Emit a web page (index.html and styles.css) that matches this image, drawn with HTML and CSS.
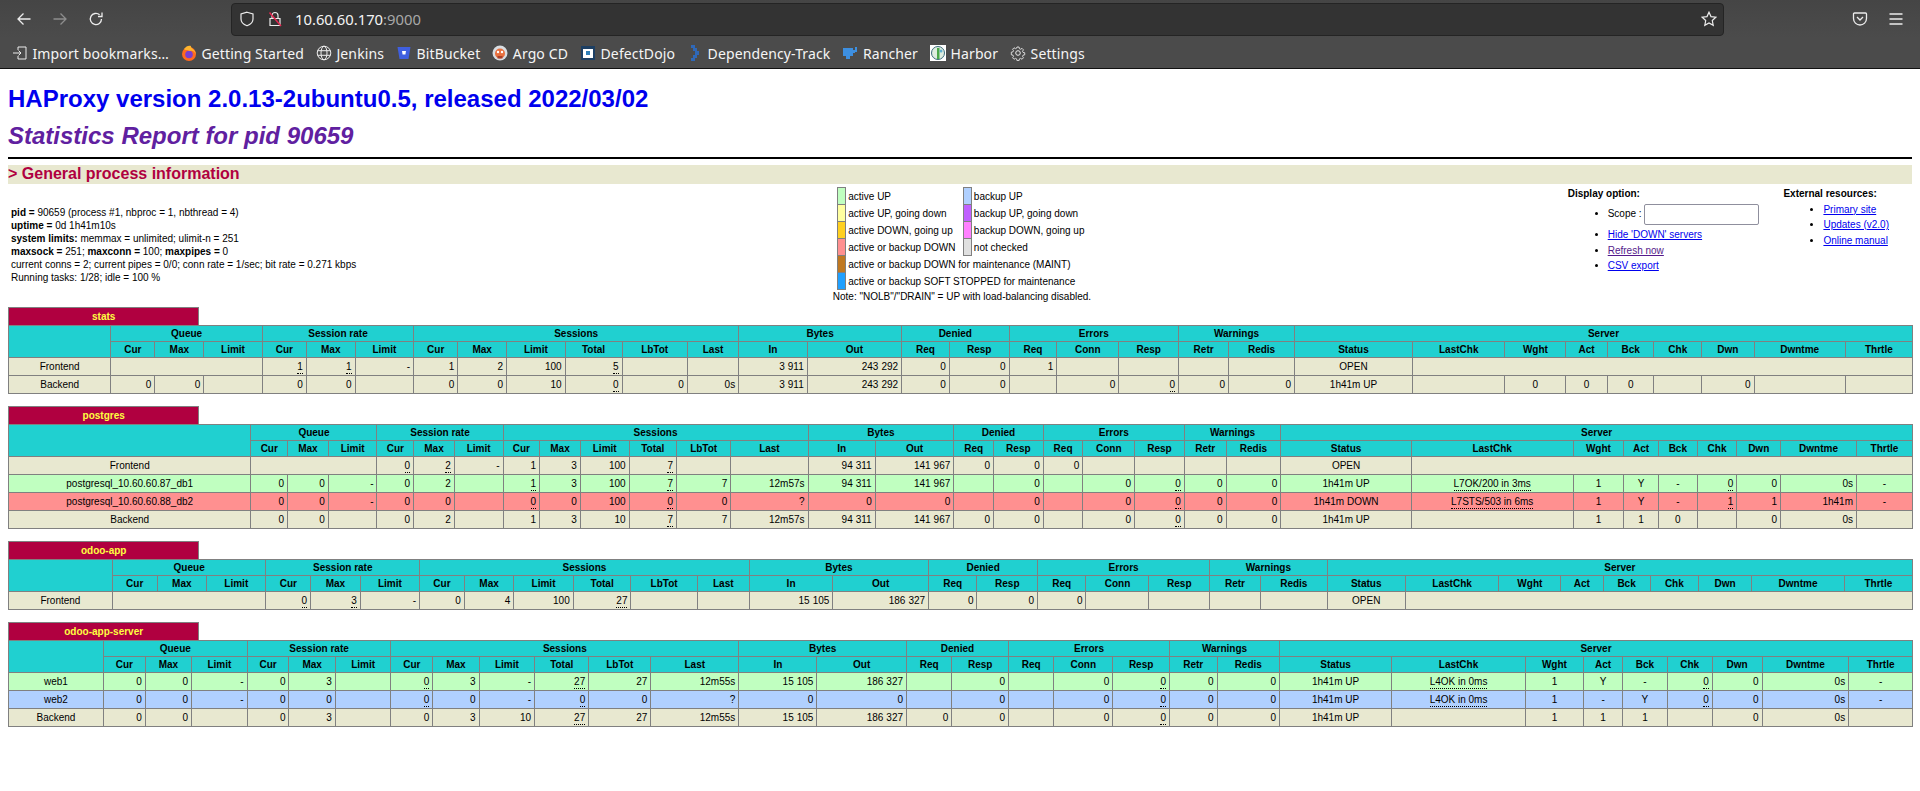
FILE: index.html
```html
<!DOCTYPE html>
<html lang="en">
<head>
<meta charset="utf-8">
<title>Statistics Report for HAProxy</title>
<link rel="stylesheet" href="styles.css">
</head>
<body>
<header class="chrome">
  <div class="navbar">
    <svg class="nav-ic" viewBox="0 0 16 16"><path d="M14.500 8H2M7.500 2.500 2 8l5.500 5.500"/></svg>
    <svg class="nav-ic dim" viewBox="0 0 16 16"><path d="M1.500 8H14M8.500 2.500 14 8l-5.500 5.500"/></svg>
    <svg class="nav-ic" viewBox="0 0 16 16"><path d="M13.500 8A5.600 5.600 0 1 1 11.600 3.800M14 1.500v4h-4"/></svg>
    <div class="urlbar">
      <svg class="url-ic" viewBox="0 0 16 16"><path d="M8 1.200 14 3v5c0 3.400-2.600 5.600-6 6.800C4.600 13.600 2 11.400 2 8V3z"/></svg>
      <svg class="url-ic lock" viewBox="0 0 16 16"><path d="M3 7.500h10v7H3zM5 7.500V4.500a3 3 0 0 1 6 0v3"/><path class="slash" d="M2.500 1.500 14 15"/></svg>
      <span class="url">10.60.60.170<span class="port">:9000</span></span>
      <svg class="url-ic star" viewBox="0 0 16 16"><path d="m8 1.200 2 4.400 4.800.6-3.500 3.300.9 4.800L8 11.900l-4.200 2.400.9-4.800L1.200 6.200 6 5.600z"/></svg>
    </div>
    <svg class="nav-ic pocket" viewBox="0 0 16 16"><path d="M2.500 2h11a1 1 0 0 1 1 1v4.500a6.500 6.500 0 0 1-13 0V3a1 1 0 0 1 1-1zM5 6l3 3 3-3"/></svg>
    <svg class="nav-ic menu" viewBox="0 0 16 16"><path d="M1.500 3h13M1.500 8h13M1.500 13h13"/></svg>
  </div>
  <nav class="bookmarks">
    <span class="bm"><svg class="bm-ic line" viewBox="0 0 16 16"><path d="M6 5V2h8v12H6v-3M1 8h8M6.500 5.500 9 8l-2.500 2.500"/></svg>Import bookmarks…</span>
    <span class="bm"><svg class="bm-ic" viewBox="0 0 16 16"><circle cx="8" cy="9" r="7" fill="#ff6a1f"/><circle cx="8" cy="9.500" r="3.800" fill="#7a3fd0"/><path d="M3 4c2-3 5-4 7-3-1 2 4 3 5 8-2-3-4-4-6-3-2-1-4 0-6-2z" fill="#ffb42e"/></svg>Getting Started</span>
    <span class="bm"><svg class="bm-ic line" viewBox="0 0 16 16"><circle cx="8" cy="8" r="6.800"/><ellipse cx="8" cy="8" rx="3" ry="6.800"/><path d="M1.500 5.700h13M1.500 10.300h13"/></svg>Jenkins</span>
    <span class="bm"><svg class="bm-ic" viewBox="0 0 16 16"><path d="M1.500 2h13l-2 12h-9z" fill="#3f5fe0"/><path d="M6 6h4l-.6 3.500H6.600z" fill="#fff"/></svg>BitBucket</span>
    <span class="bm"><svg class="bm-ic" viewBox="0 0 16 16"><circle cx="8" cy="8" r="7.500" fill="#d8dde2"/><circle cx="8" cy="8.500" r="5" fill="#e8703f"/><circle cx="6" cy="7" r="1.200" fill="#fff"/><circle cx="10" cy="7" r="1.200" fill="#fff"/><path d="M5.500 11h5v2.500h-5z" fill="#a8402a"/></svg>Argo CD</span>
    <span class="bm"><svg class="bm-ic" viewBox="0 0 16 16"><path d="M1 1h14v14H1z" fill="#1d3f63"/><path d="M3 4h10v9H3z" fill="#fff"/><path d="M6 6h4v4H6z" fill="#2f7fb8"/></svg>DefectDojo</span>
    <span class="bm"><svg class="bm-ic" viewBox="0 0 16 16"><path d="M4 0h4v3h2v3h2v4h-2v3H8v3H4v-3h2v-3h2V6H6V3H4z" fill="#2f68b8"/></svg>Dependency-Track</span>
    <span class="bm"><svg class="bm-ic" viewBox="0 0 16 16"><path d="M1 3h10v8H8v3H4v-3H1z" fill="#3d8fe0"/><path d="M11 5h2V2h2v5h-2v1h-2z" fill="#3d8fe0"/></svg>Rancher</span>
    <span class="bm"><svg class="bm-ic" viewBox="0 0 16 16"><path d="M0 0h16v16H0z" fill="#fff"/><circle cx="8" cy="8" r="6.500" fill="#dfeee0" stroke="#3a6a7a"/><path d="M7 3h2.500v11H7z" fill="#4aa84a"/><circle cx="11" cy="6" r="1.500" fill="#60b0d0"/></svg>Harbor</span>
    <span class="bm"><svg class="bm-ic line" viewBox="0 0 16 16"><circle cx="8" cy="8" r="2.300"/><path d="M6.800 1h2.400l.4 2 1.300.6 1.800-1 1.600 1.700-1.100 1.700.6 1.300 2 .4v2.400l-2 .4-.6 1.300 1.100 1.700-1.600 1.700-1.800-1-1.300.6-.4 2H6.800l-.4-2-1.300-.6-1.800 1-1.600-1.700 1.100-1.700-.6-1.300-2-.4V7l2-.4.6-1.300-1.100-1.700 1.600-1.700 1.800 1 1.300-.6z" transform="translate(1.150 1.150) scale(.86)"/></svg>Settings</span>
  </nav>
</header>
<main class="page">
<h1><a class="plain" href="#">HAProxy version 2.0.13-2ubuntu0.5, released 2022/03/02</a></h1>
<h2>Statistics Report for pid 90659</h2>
<hr class="hr">
<h3>&gt; General process information</h3>
<table class="info">
<tr>
<td class="info-left">
<p><b>pid = </b> 90659 (process #1, nbproc = 1, nbthread = 4)<br>
<b>uptime = </b> 0d 1h41m10s<br>
<b>system limits:</b> memmax = unlimited; ulimit-n = 251<br>
<b>maxsock = </b> 251; <b>maxconn = </b> 100; <b>maxpipes = </b> 0<br>
current conns = 2; current pipes = 0/0; conn rate = 1/sec; bit rate = 0.271 kbps<br>
Running tasks: 1/28; idle = 100 %<br>
</p>
</td>
<td class="info-mid">
<table class="lgd">
<tr><td class="active_up">&nbsp;</td><td class="noborder">active UP </td><td class="backup_up">&nbsp;</td><td class="noborder">backup UP </td></tr>
<tr><td class="active_going_down">&nbsp;</td><td class="noborder">active UP, going down </td><td class="backup_going_down">&nbsp;</td><td class="noborder">backup UP, going down </td></tr>
<tr><td class="active_going_up">&nbsp;</td><td class="noborder">active DOWN, going up </td><td class="backup_going_up">&nbsp;</td><td class="noborder">backup DOWN, going up </td></tr>
<tr><td class="active_down">&nbsp;</td><td class="noborder">active or backup DOWN &nbsp;</td><td class="not_checked">&nbsp;</td><td class="noborder">not checked </td></tr>
<tr><td class="maintain">&nbsp;</td><td class="noborder" colspan="3">active or backup DOWN for maintenance (MAINT) &nbsp;</td></tr>
<tr><td class="draining">&nbsp;</td><td class="noborder" colspan="3">active or backup SOFT STOPPED for maintenance &nbsp;</td></tr>
</table>
Note: "NOLB"/"DRAIN" = UP with load-balancing disabled.
</td>
<td class="info-opt">
<b>Display option:</b>
<ul>
<li><label>Scope : <input class="scope" name="scope"></label></li>
<li><a href="#">Hide 'DOWN' servers</a></li>
<li><a class="visited" href="#">Refresh now</a></li>
<li><a href="#">CSV export</a></li>
</ul>
</td>
<td class="info-opt">
<b>External resources:</b>
<ul>
<li><a href="#">Primary site</a></li>
<li><a href="#">Updates (v2.0)</a></li>
<li><a href="#">Online manual</a></li>
</ul>
</td>
</tr>
</table>

<div class="proxy">
<table class="tbl title"><tr class="titre"><th class="pxname">stats</th><th class="empty"></th></tr></table>
<table class="tbl">
<tr class="titre"><th rowspan="2"></th><th colspan="3">Queue</th><th colspan="3">Session rate</th><th colspan="6">Sessions</th><th colspan="2">Bytes</th><th colspan="2">Denied</th><th colspan="3">Errors</th><th colspan="2">Warnings</th><th colspan="9">Server</th></tr>
<tr class="titre"><th>Cur</th><th>Max</th><th>Limit</th><th>Cur</th><th>Max</th><th>Limit</th><th>Cur</th><th>Max</th><th>Limit</th><th>Total</th><th>LbTot</th><th>Last</th><th>In</th><th>Out</th><th>Req</th><th>Resp</th><th>Req</th><th>Conn</th><th>Resp</th><th>Retr</th><th>Redis</th><th>Status</th><th>LastChk</th><th>Wght</th><th>Act</th><th>Bck</th><th>Chk</th><th>Dwn</th><th>Dwntme</th><th>Thrtle</th></tr>
<tr class="frontend"><td class="ac">Frontend</td><td colspan="3"></td><td><u>1</u></td><td><u>1</u></td><td>-</td><td>1</td><td>2</td><td>100</td><td><u>5</u></td><td></td><td></td><td><span class="rls">3</span>911</td><td>24<span class="rls">3</span>292</td><td>0</td><td>0</td><td>1</td><td></td><td></td><td></td><td></td><td class="ac">OPEN</td><td colspan="8"></td></tr>
<tr class="backend"><td class="ac">Backend</td><td>0</td><td>0</td><td></td><td>0</td><td>0</td><td></td><td>0</td><td>0</td><td>10</td><td><u>0</u></td><td>0</td><td>0s</td><td><span class="rls">3</span>911</td><td>24<span class="rls">3</span>292</td><td>0</td><td>0</td><td></td><td>0</td><td><u>0</u></td><td>0</td><td>0</td><td class="ac">1h41m UP</td><td class="ac"></td><td class="ac">0</td><td class="ac">0</td><td class="ac">0</td><td class="ac"></td><td>0</td><td></td><td></td></tr>
</table>
</div>

<div class="proxy">
<table class="tbl title"><tr class="titre"><th class="pxname">postgres</th><th class="empty"></th></tr></table>
<table class="tbl">
<tr class="titre"><th rowspan="2"></th><th colspan="3">Queue</th><th colspan="3">Session rate</th><th colspan="6">Sessions</th><th colspan="2">Bytes</th><th colspan="2">Denied</th><th colspan="3">Errors</th><th colspan="2">Warnings</th><th colspan="9">Server</th></tr>
<tr class="titre"><th>Cur</th><th>Max</th><th>Limit</th><th>Cur</th><th>Max</th><th>Limit</th><th>Cur</th><th>Max</th><th>Limit</th><th>Total</th><th>LbTot</th><th>Last</th><th>In</th><th>Out</th><th>Req</th><th>Resp</th><th>Req</th><th>Conn</th><th>Resp</th><th>Retr</th><th>Redis</th><th>Status</th><th>LastChk</th><th>Wght</th><th>Act</th><th>Bck</th><th>Chk</th><th>Dwn</th><th>Dwntme</th><th>Thrtle</th></tr>
<tr class="frontend"><td class="ac">Frontend</td><td colspan="3"></td><td><u>0</u></td><td><u>2</u></td><td>-</td><td>1</td><td>3</td><td>100</td><td><u>7</u></td><td></td><td></td><td>9<span class="rls">4</span>311</td><td>14<span class="rls">1</span>967</td><td>0</td><td>0</td><td>0</td><td></td><td></td><td></td><td></td><td class="ac">OPEN</td><td colspan="8"></td></tr>
<tr class="active_up"><td class="ac">postgresql_10.60.60.87_db1</td><td>0</td><td>0</td><td>-</td><td>0</td><td>2</td><td></td><td><u>1</u></td><td>3</td><td>100</td><td><u>7</u></td><td>7</td><td>12m57s</td><td>9<span class="rls">4</span>311</td><td>14<span class="rls">1</span>967</td><td></td><td>0</td><td></td><td>0</td><td><u>0</u></td><td>0</td><td>0</td><td class="ac">1h41m UP</td><td class="ac"><u>L7OK/200 in 3ms</u></td><td class="ac">1</td><td class="ac">Y</td><td class="ac">-</td><td><u>0</u></td><td>0</td><td>0s</td><td class="ac">-</td></tr>
<tr class="active_down"><td class="ac">postgresql_10.60.60.88_db2</td><td>0</td><td>0</td><td>-</td><td>0</td><td>0</td><td></td><td><u>0</u></td><td>0</td><td>100</td><td><u>0</u></td><td>0</td><td>?</td><td>0</td><td>0</td><td></td><td>0</td><td></td><td>0</td><td><u>0</u></td><td>0</td><td>0</td><td class="ac">1h41m DOWN</td><td class="ac"><u>L7STS/503 in 6ms</u></td><td class="ac">1</td><td class="ac">Y</td><td class="ac">-</td><td><u>1</u></td><td>1</td><td>1h41m</td><td class="ac">-</td></tr>
<tr class="backend"><td class="ac">Backend</td><td>0</td><td>0</td><td></td><td>0</td><td>2</td><td></td><td>1</td><td>3</td><td>10</td><td><u>7</u></td><td>7</td><td>12m57s</td><td>9<span class="rls">4</span>311</td><td>14<span class="rls">1</span>967</td><td>0</td><td>0</td><td></td><td>0</td><td><u>0</u></td><td>0</td><td>0</td><td class="ac">1h41m UP</td><td class="ac"></td><td class="ac">1</td><td class="ac">1</td><td class="ac">0</td><td class="ac"></td><td>0</td><td>0s</td><td></td></tr>
</table>
</div>

<div class="proxy">
<table class="tbl title"><tr class="titre"><th class="pxname">odoo-app</th><th class="empty"></th></tr></table>
<table class="tbl">
<tr class="titre"><th rowspan="2"></th><th colspan="3">Queue</th><th colspan="3">Session rate</th><th colspan="6">Sessions</th><th colspan="2">Bytes</th><th colspan="2">Denied</th><th colspan="3">Errors</th><th colspan="2">Warnings</th><th colspan="9">Server</th></tr>
<tr class="titre"><th>Cur</th><th>Max</th><th>Limit</th><th>Cur</th><th>Max</th><th>Limit</th><th>Cur</th><th>Max</th><th>Limit</th><th>Total</th><th>LbTot</th><th>Last</th><th>In</th><th>Out</th><th>Req</th><th>Resp</th><th>Req</th><th>Conn</th><th>Resp</th><th>Retr</th><th>Redis</th><th>Status</th><th>LastChk</th><th>Wght</th><th>Act</th><th>Bck</th><th>Chk</th><th>Dwn</th><th>Dwntme</th><th>Thrtle</th></tr>
<tr class="frontend"><td class="ac">Frontend</td><td colspan="3"></td><td><u>0</u></td><td><u>3</u></td><td>-</td><td>0</td><td>4</td><td>100</td><td><u>27</u></td><td></td><td></td><td>1<span class="rls">5</span>105</td><td>18<span class="rls">6</span>327</td><td>0</td><td>0</td><td>0</td><td></td><td></td><td></td><td></td><td class="ac">OPEN</td><td colspan="8"></td></tr>
</table>
</div>

<div class="proxy">
<table class="tbl title"><tr class="titre"><th class="pxname">odoo-app-server</th><th class="empty"></th></tr></table>
<table class="tbl">
<tr class="titre"><th rowspan="2"></th><th colspan="3">Queue</th><th colspan="3">Session rate</th><th colspan="6">Sessions</th><th colspan="2">Bytes</th><th colspan="2">Denied</th><th colspan="3">Errors</th><th colspan="2">Warnings</th><th colspan="9">Server</th></tr>
<tr class="titre"><th>Cur</th><th>Max</th><th>Limit</th><th>Cur</th><th>Max</th><th>Limit</th><th>Cur</th><th>Max</th><th>Limit</th><th>Total</th><th>LbTot</th><th>Last</th><th>In</th><th>Out</th><th>Req</th><th>Resp</th><th>Req</th><th>Conn</th><th>Resp</th><th>Retr</th><th>Redis</th><th>Status</th><th>LastChk</th><th>Wght</th><th>Act</th><th>Bck</th><th>Chk</th><th>Dwn</th><th>Dwntme</th><th>Thrtle</th></tr>
<tr class="active_up"><td class="ac">web1</td><td>0</td><td>0</td><td>-</td><td>0</td><td>3</td><td></td><td><u>0</u></td><td>3</td><td>-</td><td><u>27</u></td><td>27</td><td>12m55s</td><td>1<span class="rls">5</span>105</td><td>18<span class="rls">6</span>327</td><td></td><td>0</td><td></td><td>0</td><td><u>0</u></td><td>0</td><td>0</td><td class="ac">1h41m UP</td><td class="ac"><u>L4OK in 0ms</u></td><td class="ac">1</td><td class="ac">Y</td><td class="ac">-</td><td><u>0</u></td><td>0</td><td>0s</td><td class="ac">-</td></tr>
<tr class="backup_up"><td class="ac">web2</td><td>0</td><td>0</td><td>-</td><td>0</td><td>0</td><td></td><td><u>0</u></td><td>0</td><td>-</td><td><u>0</u></td><td>0</td><td>?</td><td>0</td><td>0</td><td></td><td>0</td><td></td><td>0</td><td><u>0</u></td><td>0</td><td>0</td><td class="ac">1h41m UP</td><td class="ac"><u>L4OK in 0ms</u></td><td class="ac">1</td><td class="ac">-</td><td class="ac">Y</td><td><u>0</u></td><td>0</td><td>0s</td><td class="ac">-</td></tr>
<tr class="backend"><td class="ac">Backend</td><td>0</td><td>0</td><td></td><td>0</td><td>3</td><td></td><td>0</td><td>3</td><td>10</td><td><u>27</u></td><td>27</td><td>12m55s</td><td>1<span class="rls">5</span>105</td><td>18<span class="rls">6</span>327</td><td>0</td><td>0</td><td></td><td>0</td><td><u>0</u></td><td>0</td><td>0</td><td class="ac">1h41m UP</td><td class="ac"></td><td class="ac">1</td><td class="ac">1</td><td class="ac">1</td><td class="ac"></td><td>0</td><td>0s</td><td></td></tr>
</table>
</div>
</main>
</body>
</html>
```
FILE: styles.css
```css
* { box-sizing: content-box; }
html, body { margin: 0; background: #fff; }
body {
  font-family: "Liberation Sans", Arial, sans-serif;
  font-size: 12px;
  color: #000;
  overflow: hidden;
}

/* browser chrome */
.chrome {
  height: 68px;
  background: #4b4b4b;
  border-bottom: 1px solid #111;
  font-family: "Noto Sans", sans-serif;
  color: #f5f5f5;
}
.navbar {
  height: 38px;
  display: flex;
  align-items: center;
  padding: 0 16px;
  background: linear-gradient(#454545, #4b4b4b);
}
.nav-ic {
  width: 16px;
  height: 16px;
  flex: none;
  margin-right: 20px;
  fill: none;
  stroke: #ececec;
  stroke-width: 1.3;
}
.nav-ic.dim { stroke: #8d8d8d; }
.nav-ic.pocket { margin-left: 128px; }
.nav-ic.menu { margin-right: 0; }
.urlbar {
  flex: 0 0 1491px;
  height: 31px;
  margin-left: 107px;
  display: flex;
  align-items: center;
  background: #333;
  border: 1px solid #242424;
  border-radius: 4px;
  font-size: 14.8px;
}
.url-ic {
  width: 16px;
  height: 16px;
  flex: none;
  margin-left: 7px;
  fill: none;
  stroke: #ececec;
  stroke-width: 1.2;
}
.url-ic.lock { margin-left: 12px; }
.slash { stroke: #e22850; stroke-width: 1.5; }
.url { margin-left: 12px; color: #f4f4f4; }
.port { color: #a8a8a8; }
.url-ic.star { margin-left: auto; margin-right: 6px; }
.bookmarks {
  height: 30px;
  display: flex;
  align-items: center;
  padding-left: 12px;
  gap: 12px;
  font-size: 14px;
  letter-spacing: .12px;
  white-space: nowrap;
}
.bm { display: flex; align-items: center; gap: 4.5px; }
.bm-ic { width: 16px; height: 16px; flex: none; }
.bm-ic.line { fill: none; stroke: #ececec; stroke-width: 1; }

/* page */
.page { padding: 16px 8px 0; }
h1 { font-size: 24px; line-height: 27px; margin: 0 0 11px; }
h2 { font-size: 24px; line-height: 26px; padding-bottom: 2px; margin: 0; font-style: italic; color: #6020a0; }
h3 { font-size: 16px; line-height: 17px; padding-bottom: 2px; margin: 0; color: #b00040; background: #e8e8d0; }
.hr { margin: 6px 0; height: 0; border: 0; border-bottom: 2px solid #000; }
a { color: #0000ee; }
a.plain { text-decoration: none; }
a.visited { color: #551a8b; }
th, td { font-size: 10px; line-height: 13px; }

.info { width: 100%; }
.info-left { text-align: left; white-space: nowrap; width: 1%; }
.info-mid { text-align: center; white-space: nowrap; }
.info-opt { text-align: left; vertical-align: top; white-space: nowrap; width: 1%; }
.info ul { margin: 2.5px 0 10px; padding-left: 40px; }
.info li { margin: 2.5px 20px 0 0; }
.scope { width: 109px; height: 17px; margin: 1px 0; padding: 1px 2px; border: 1px solid #8f8f9d; border-radius: 2px; font-size: 10px; vertical-align: middle; background: #fff; }

.lgd { border-collapse: collapse; margin: 0 auto; }
.lgd td { border: 1px solid gray; padding: 3px 2px 1px; line-height: 12px; text-align: left; }
.lgd td.noborder { border: 0; white-space: nowrap; }

.proxy { margin-bottom: 12px; }
.proxy:first-of-type { margin-top: 1px; }
.tbl { border-collapse: collapse; width: 100%; }
.tbl td { text-align: right; border: 1px solid gray; padding: 2px 3px; white-space: nowrap; }
.tbl td.ac { text-align: center; }
.tbl th { border: 1px solid gray; padding: 1px; }
.tbl th.pxname { width: 10%; background: #b00040; color: #ffff40; border-bottom: 0; padding: 2px 3px; white-space: nowrap; }
.tbl th.empty { width: 90%; border: 0; background: #fff; }
.titre { background: #20d0d0; color: #000; font-weight: bold; text-align: center; }
.frontend, .backend { background: #e8e8d0; }
.active_up { background: #c0ffc0; }
.active_down { background: #ff9090; }
.active_going_down { background: #ffffa0; }
.active_going_up { background: #ffd020; }
.backup_up { background: #b0d0ff; }
.backup_going_down { background: #c060ff; }
.backup_going_up { background: #ff80ff; }
.not_checked { background: #e0e0e0; }
.maintain { background: #c07820; }
.draining { background: #20a0ff; }
.rls { letter-spacing: .2em; margin-right: 1px; }
u { text-decoration: none; padding-bottom: 1px; border-bottom: 1px dotted #000; }
```
